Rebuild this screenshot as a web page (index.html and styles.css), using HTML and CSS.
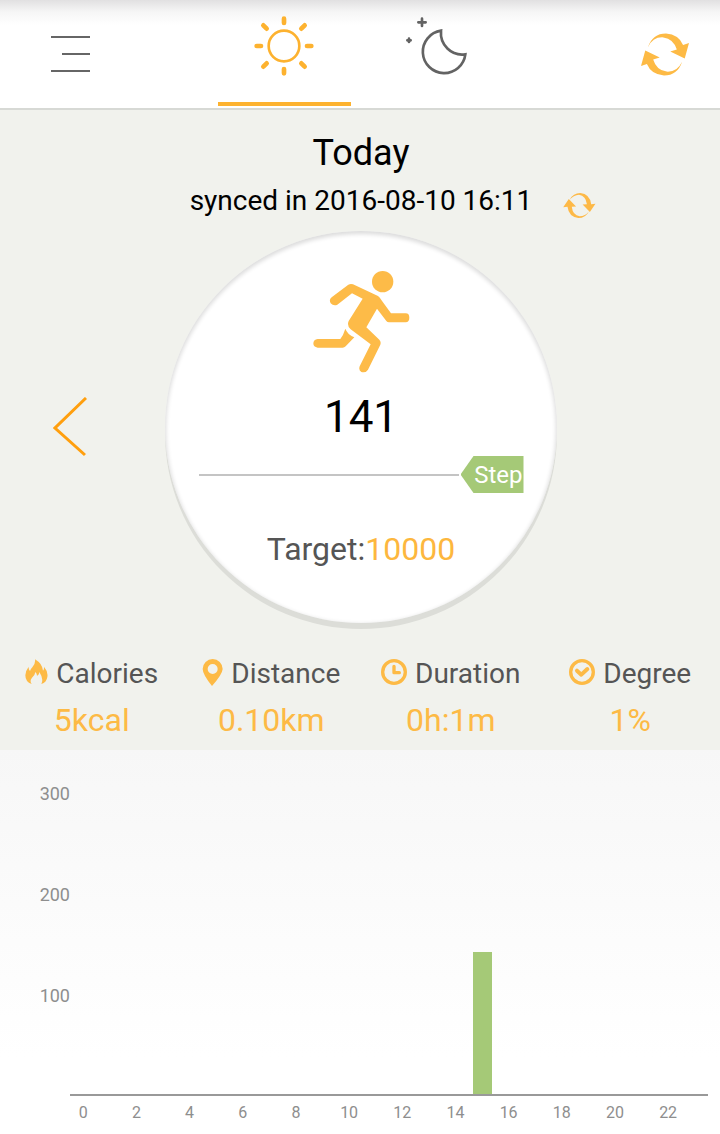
FILE: index.html
```html
<!DOCTYPE html>
<html lang="en">
    <head>
        <meta charset="UTF-8">
        <meta name="viewport" content="width=device-width, initial-scale=1.0">
        <title>Today</title>
        <link rel="stylesheet" href="styles.css">
    </head>
    <body>
        <header class="topbar">
            <button type="button" class="menu-button" aria-label="Menu">
                <span></span>
                <span class="short"></span>
                <span></span>
            </button>
            <nav class="tabs">
                <a href="#day" class="tab active" aria-label="Day">
                    <svg width="60" height="60" viewBox="-90 -90 180 180" fill="none" stroke="#fdb22f" stroke-linecap="round">
                        <circle r="46" stroke-width="8"/>
                        <path stroke-width="14" d="M0 -69V-82M0 69V82M-69 0H-82M69 0H82M-52 -52L-62 -62M52 -52L62 -62M-52 52L-62 62M52 52L62 62"/>
                    </svg>
                </a>
                <a href="#night" class="tab" aria-label="Night">
                    <svg width="62" height="58" viewBox="136 52 186 174" fill="none" stroke="#636363" stroke-width="8">
                        <path d="M244 93A64 64 0 1 0 317 164C275 170 240 135 244 93Z"/>
                        <path stroke-linecap="round" d="M187 57V79M176 68H198"/>
                        <path stroke-linecap="round" d="M148 117V127M143 122H153"/>
                    </svg>
                </a>
            </nav>
            <button type="button" class="refresh-button" aria-label="Refresh">
                <svg width="48" height="43" viewBox="842 98 146 128" fill="#fdba45">
                    <path d="M863 140Q877 98 918 98Q957 101 970 133L988 127L975 174L931 153L951 147Q941 114 910 110Q878 108 863 140Z"/>
                    <path transform="rotate(180 915 162)" d="M863 140Q877 98 918 98Q957 101 970 133L988 127L975 174L931 153L951 147Q941 114 910 110Q878 108 863 140Z"/>
                </svg>
            </button>
        </header>

        <main class="summary">
            <h1>Today</h1>
            <div class="sync">
                <p>synced in 2016-08-10 16:11</p>
                <button type="button" class="sync-button" aria-label="Sync now">
                    <svg width="33" height="27" viewBox="38 30 99 82" fill="#fdb947">
                        <path d="M58 53Q68 33 90 33Q119 36 123 67L136 66L119 91L97 68L110 67Q107 41 86 38Q69 39 58 53Z"/>
                        <path transform="rotate(180 87 71)" d="M58 53Q68 33 90 33Q119 36 123 67L136 66L119 91L97 68L110 67Q107 41 86 38Q69 39 58 53Z"/>
                    </svg>
                </button>
            </div>

            <div class="dial-row">
                <button type="button" class="prev-button" aria-label="Previous day">
                    <svg width="34" height="60" viewBox="0 0 34 60" fill="none" stroke="#ff9f0e" stroke-width="3">
                        <path d="M33 1L2 31L32 58"/>
                    </svg>
                </button>
                <section class="dial">
                    <svg width="97" height="102" viewBox="67 47 291 306" fill="#fdbb48">
                        <circle cx="276" cy="79" r="32"/>
                        <path d="M187 87L262 122Q268 126 272 134L301 174H345Q356 174 356 187T345 201H295Q290 201 287 197L259 160L227 216L266 253Q272 259 269 268L232 343Q225 354 212 350Q203 345 207 333L240 267L180 222Q168 211 174 197L216 130L184 114L140 148Q129 153 120 144Q114 133 123 126L173 88Q180 84 187 87Z"/>
                        <path d="M164 220Q170 237 191 246L165 273Q161 277 156 277H81Q68 275 68 264Q69 252 81 251H149Q158 240 164 220Z"/>
                    </svg>
                    <p class="steps">141</p>
                    <div class="progress">
                        <span class="track"></span>
                        <span class="tag">Step</span>
                    </div>
                    <p class="target">Target:<span>10000</span></p>
                </section>
            </div>

            <dl class="stats">
                <div class="stat">
                    <dt>
                        <svg width="23" height="26" viewBox="77 59 69 78" fill="#fdba45">
                            <path d="M107 60Q129 73 131 94Q135 90 134 82Q147 97 144 113Q142 129 126 134Q134 119 120 98Q119 108 113 109Q113 103 108 98Q107 108 98 115Q90 124 97 134Q78 128 78 108Q78 95 88 82Q87 91 92 95Q94 89 99 84Q109 74 107 60Z"/>
                        </svg>
                        Calories
                    </dt>
                    <dd>5kcal</dd>
                </div>
                <div class="stat">
                    <dt>
                        <svg width="21" height="27" viewBox="608 56 63 81" fill="#fdba45" fill-rule="evenodd">
                            <path d="M640 56A30 30 0 0 1 670 86Q669 102 638 137Q610 102 610 86A30 30 0 0 1 640 56ZM640 71A15 15 0 1 0 640 101A15 15 0 1 0 640 71Z"/>
                        </svg>
                        Distance
                    </dt>
                    <dd>0.10km</dd>
                </div>
                <div class="stat">
                    <dt>
                        <svg width="26" height="26" viewBox="65 57 78 78" fill="none" stroke="#fdba45" stroke-width="10">
                            <circle cx="104" cy="96" r="34"/>
                            <path stroke-linecap="round" stroke-linejoin="round" d="M104 79V98H120"/>
                        </svg>
                        Duration
                    </dt>
                    <dd>0h:1m</dd>
                </div>
                <div class="stat">
                    <dt>
                        <svg width="26" height="26" viewBox="632 57 78 78" fill="none" stroke="#fdba45" stroke-width="10">
                            <circle cx="671" cy="96" r="34"/>
                            <path stroke-width="12" stroke-linecap="round" stroke-linejoin="round" d="M656 92L669 104L687 87"/>
                        </svg>
                        Degree
                    </dt>
                    <dd>1%</dd>
                </div>
            </dl>
        </main>

        <section class="chart">
            <div class="y-axis">
                <span>300</span>
                <span>200</span>
                <span>100</span>
            </div>
            <div class="plot">
                <div class="bar" style="grid-column: 16; height: 47%"></div>
            </div>
            <div class="x-axis">
                <span>0</span>
                <span>2</span>
                <span>4</span>
                <span>6</span>
                <span>8</span>
                <span>10</span>
                <span>12</span>
                <span>14</span>
                <span>16</span>
                <span>18</span>
                <span>20</span>
                <span>22</span>
            </div>
        </section>
    </body>
</html>
```
FILE: styles.css
```css
* {
    box-sizing: border-box;
}

body {
    font-family: Roboto, "Noto Sans", sans-serif;
    background-color: white;
    color: black;
    margin: 0;
}

h1, p, dl, dd {
    margin: 0;
    font-weight: normal;
}

svg {
    display: block;
}

button {
    background: none;
    border: none;
    padding: 0;
    cursor: pointer;
}

/* top bar */
.topbar {
    display: grid;
    grid-template-columns: 1fr auto 1fr;
    align-items: center;
    height: 110px;
    padding: 0 31px 0 51px;
    background: linear-gradient(#e1e0e1, #f6f6f6 12px, white 25px);
    border-bottom: 2px solid #d7d9d5;
}

.menu-button {
    display: flex;
    flex-direction: column;
    align-items: flex-end;
    justify-content: space-between;
    width: 39px;
    height: 36px;
}

.menu-button span {
    width: 100%;
    height: 2px;
    background-color: #666;
}

.menu-button .short {
    width: 28px;
}

.tabs {
    display: flex;
    gap: 19px;
    height: 100%;
    padding-bottom: 2px;
    margin-right: 20px;
}

.tab {
    display: flex;
    justify-content: center;
    align-items: center;
    width: 133px;
    padding-bottom: 10px;
    border-bottom: 4px solid transparent;
}

.tab.active {
    border-bottom-color: #fdb22f;
}

.refresh-button {
    justify-self: end;
}

/* day summary */
.summary {
    background-color: #f1f2ed;
    padding: 22px 0 10px 2px;
    text-align: center;
}

h1 {
    font-size: 36px;
    line-height: 42px;
}

.sync {
    display: grid;
    grid-template-columns: 1fr auto 1fr;
    align-items: end;
    margin-top: 9px;
    font-size: 28px;
    line-height: 36px;
}

.sync p {
    grid-column: 2;
}

.sync-button {
    justify-self: start;
    margin-left: 31px;
}

.dial-row {
    display: grid;
    grid-template-columns: 1fr auto 1fr;
    align-items: center;
    margin-top: 12px;
}

.prev-button {
    justify-self: start;
    margin-left: 51px;
}

.dial {
    display: flex;
    flex-direction: column;
    align-items: center;
    width: 392px;
    height: 392px;
    padding-top: 40px;
    border-radius: 50%;
    background-color: white;
    box-shadow: 0 6px 0 #dcddd8, inset 0 2px 4px 1px #dcdcdc;
}

.steps {
    margin-top: 18px;
    font-size: 44px;
    line-height: 52px;
}

.progress {
    display: flex;
    align-items: center;
    gap: 2px;
    width: 325px;
    margin-top: 13px;
}

.track {
    flex: 1;
    height: 2px;
    background-color: #c4c4c4;
}

.tag {
    width: 63px;
    padding: 2px 1px 0 0;
    background-color: #a5c977;
    clip-path: polygon(13px 0, 100% 0, 100% 100%, 13px 100%, 0 50%);
    color: white;
    font-size: 24px;
    line-height: 35px;
    text-align: right;
}

.target {
    margin-top: 36px;
    color: #555;
    font-size: 32px;
    line-height: 40px;
}

.target span {
    color: #fdb73e;
}

.stats {
    display: grid;
    grid-template-columns: repeat(4, 1fr);
    margin-top: 33px;
}

.stat dt {
    display: flex;
    justify-content: center;
    align-items: center;
    gap: 8px;
    color: #555;
    font-size: 28px;
    line-height: 36px;
}

.stat svg {
    margin-bottom: 4px;
}

.stat dd {
    margin-top: 8px;
    color: #fdba45;
    font-size: 32px;
    line-height: 40px;
}

/* hourly steps */
.chart {
    display: grid;
    grid-template-columns: 70px 1fr;
    padding: 34px 12px 11px 0;
    background: linear-gradient(#f7f7f7, white 80%);
    color: #8e8e8e;
}

.y-axis {
    display: flex;
    flex-direction: column;
    font-size: 18px;
    line-height: 20px;
    text-align: right;
}

.y-axis span {
    height: 101px;
}

.plot {
    display: grid;
    grid-template-columns: repeat(24, 1fr);
    align-items: end;
    height: 305px;
    margin-top: 7px;
    border-bottom: 2px solid #999;
}

.bar {
    justify-self: center;
    width: 19px;
    background-color: #a5c977;
}

.x-axis {
    grid-column: 2;
    display: grid;
    grid-template-columns: repeat(12, 1fr);
    margin-top: 7px;
    font-size: 16px;
    line-height: 20px;
}

.x-axis span {
    width: 50%;
    text-align: center;
}
```
